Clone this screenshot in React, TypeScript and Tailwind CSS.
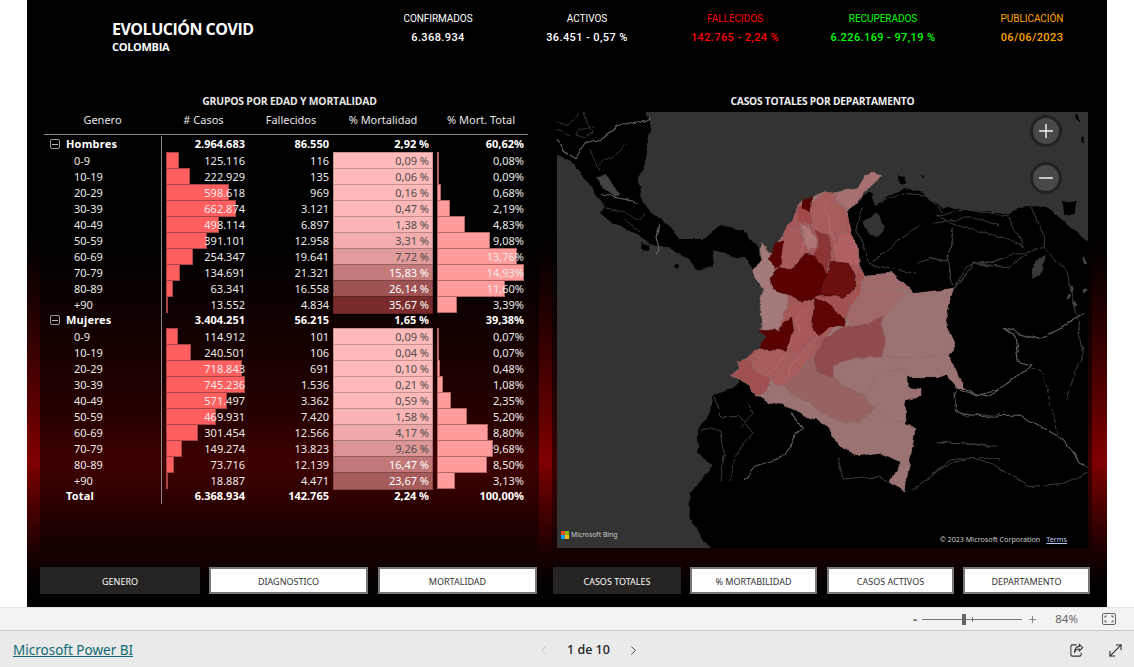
import { ChevronLeft, ChevronRight, Minus, MoveDiagonal, Plus } from "lucide-react";

type Row = { label: string; cases: string; dead: string; mort: string; total: string };

const MAX_CASES = 745236;
const MAX_TOTAL = 14.93;

const toNum = (s: string) => parseFloat(s.replace(/\./g, "").replace(",", "."));

// cell colour for % mortalidad, goes from pink to dark red
const mortColor = (v: number) => {
  const t = Math.min(v / 35.67, 1);
  const r = Math.round(255 - t * (255 - 122));
  const g = Math.round(186 - t * (186 - 44));
  const b = Math.round(186 - t * (186 - 44));
  return `rgb(${r},${g},${b})`;
};

const hombres: Row[] = [
  { label: "0-9", cases: "125.116", dead: "116", mort: "0,09 %", total: "0,08%" },
  { label: "10-19", cases: "222.929", dead: "135", mort: "0,06 %", total: "0,09%" },
  { label: "20-29", cases: "598.618", dead: "969", mort: "0,16 %", total: "0,68%" },
  { label: "30-39", cases: "662.874", dead: "3.121", mort: "0,47 %", total: "2,19%" },
  { label: "40-49", cases: "498.114", dead: "6.897", mort: "1,38 %", total: "4,83%" },
  { label: "50-59", cases: "391.101", dead: "12.958", mort: "3,31 %", total: "9,08%" },
  { label: "60-69", cases: "254.347", dead: "19.641", mort: "7,72 %", total: "13,76%" },
  { label: "70-79", cases: "134.691", dead: "21.321", mort: "15,83 %", total: "14,93%" },
  { label: "80-89", cases: "63.341", dead: "16.558", mort: "26,14 %", total: "11,60%" },
  { label: "+90", cases: "13.552", dead: "4.834", mort: "35,67 %", total: "3,39%" },
];

const mujeres: Row[] = [
  { label: "0-9", cases: "114.912", dead: "101", mort: "0,09 %", total: "0,07%" },
  { label: "10-19", cases: "240.501", dead: "106", mort: "0,04 %", total: "0,07%" },
  { label: "20-29", cases: "718.843", dead: "691", mort: "0,10 %", total: "0,48%" },
  { label: "30-39", cases: "745.236", dead: "1.536", mort: "0,21 %", total: "1,08%" },
  { label: "40-49", cases: "571.497", dead: "3.362", mort: "0,59 %", total: "2,35%" },
  { label: "50-59", cases: "469.931", dead: "7.420", mort: "1,58 %", total: "5,20%" },
  { label: "60-69", cases: "301.454", dead: "12.566", mort: "4,17 %", total: "8,80%" },
  { label: "70-79", cases: "149.274", dead: "13.823", mort: "9,26 %", total: "9,68%" },
  { label: "80-89", cases: "73.716", dead: "12.139", mort: "16,47 %", total: "8,50%" },
  { label: "+90", cases: "18.887", dead: "4.471", mort: "23,67 %", total: "3,13%" },
];

const gridCols = "grid grid-cols-[117px_85px_86px_102px_94px]";
const panelBg = "bg-linear-to-b from-black/60 from-[70%] to-black/35";

const GroupRow = ({ label, cases, dead, mort, total, box }: Row & { box?: boolean }) => (
  <div className={`${gridCols} h-4 items-center font-bold text-white`}>
    <div className="flex items-center pl-[6px]">
      {box ? (
        <span className="mr-[6px] flex h-[10px] w-[10px] items-center justify-center rounded-[2px] border border-[#999]">
          <span className="h-px w-[6px] bg-[#bbb]" />
        </span>
      ) : (
        <span className="w-4" />
      )}
      <span className="tracking-[0.2px]">{label}</span>
    </div>
    <div className="flex h-full items-center justify-end border-l border-[#888] pr-[1px]">{cases}</div>
    <div className="pr-[3px] text-right">{dead}</div>
    <div className="pr-[5px] text-right">{mort}</div>
    <div className="pr-[4px] text-right">{total}</div>
  </div>
);

const DataRow = ({ label, cases, dead, mort, total }: Row) => {
  const m = toNum(mort);
  const casesW = (toNum(cases) / MAX_CASES) * 79;
  const totalW = (toNum(total) / MAX_TOTAL) * 87;
  return (
    <div className={`${gridCols} h-4 items-center text-[#eaeaea]`}>
      <div className="pl-[30px]">{label}</div>
      <div className="relative flex h-full items-center justify-end border-l border-[#888] pr-[1px]">
        <div
          className="absolute top-0 bottom-px left-[4px] border border-[#a84444] bg-[#ff5f5f]"
          style={{ width: casesW }}
        />
        <span className="relative">{cases}</span>
      </div>
      <div className="pr-[3px] text-right">{dead}</div>
      <div
        className={`mx-px flex h-full items-center justify-end border border-[#00000038] pr-[3px] ${
          m >= 15 ? "text-white" : "text-[#4d4d4d]"
        }`}
        style={{ backgroundColor: mortColor(m) }}
      >
        {mort}
      </div>
      <div className="relative flex h-full items-center justify-end pr-[4px]">
        <div
          className="absolute top-0 bottom-px left-[3px] border border-[#b06464] bg-[#ff9c9c]"
          style={{ width: totalW }}
        />
        <span className="relative">{total}</span>
      </div>
    </div>
  );
};

const Kpi = ({ label, value, color, className }: { label: string; value: string; color: string; className: string }) => (
  <div className={`w-[120px] text-center font-['Roboto',sans-serif] ${color} ${className}`}>
    <div className="mt-px text-[10px] leading-[12px] tracking-[-0.05px]">{label}</div>
    <div className="mt-[6px] text-[11px] leading-[13px] font-medium tracking-[0.4px]">{value}</div>
  </div>
);

const Tab = ({ label, active, className }: { label: string; active?: boolean; className: string }) => (
  <div
    className={`flex h-[27px] items-center justify-center pt-[2px] text-[9px] ${className} ${
      active ? "bg-[#252423] text-white" : "border-2 border-[#777] bg-white text-[#333]"
    }`}
  >
    {label}
  </div>
);

// drawn in page coordinates of the reference, land is black on a grey sea
const MapDrawing = () => (
  <svg viewBox="557 112 531 436" className="block h-full w-full">
    <defs>
      <filter id="rough" x="-5%" y="-5%" width="110%" height="110%" colorInterpolationFilters="sRGB">
        <feTurbulence type="fractalNoise" baseFrequency="0.06" numOctaves="3" seed="4" />
        <feDisplacementMap in="SourceGraphic" scale="7" xChannelSelector="R" yChannelSelector="G" />
        <feGaussianBlur stdDeviation="0.35" />
      </filter>
    </defs>
    <rect x="557" y="112" width="531" height="436" fill="#333333" />
    <g filter="url(#rough)">
      {/* central america */}
      <path
        d="M540 95L635 95L648 118L650 130L645 160L637 182L643 203L658 217L678 238L702 238L718 226L743 230L760 247L762 262L755 272L745 258L712 250L714 267L695 270L690 262L670 247L655 247L645 240L625 227L612 223L600 213L605 207L592 187L578 170L565 158L540 145Z"
        fill="#000"
      />
      <path d="M598 178L605 177L620 193L615 197L602 188Z" fill="#444" />
      <path d="M643 243l8 3-3 5-6-2ZM676 263l4 2-3 4-3-2Z" fill="#000" />
      {/* south america */}
      <path
        d="M718 565L692 520L688 493L702 480L712 463L698 453L698 430L710 413L712 395L735 387L770 340L775 260L805 215L848 212L862 197L870 193L875 205L890 195L903 188L923 192L940 210L950 207L977 210L1007 213L1030 205L1047 208L1073 230L1100 247L1100 565Z"
        fill="#000"
      />
      <path d="M865 222L874 212L886 228L878 237L870 235Z" fill="#333" />
      <path d="M1063 203L1077 201L1076 214L1064 215Z" fill="#000" />
      <path d="M899 175L906 176L906 184L900 184ZM1075 115l4 1 1 7-4-2ZM1082 136l2 2-1 5-2-3ZM920 175l4 2-2 1Z" fill="#000" />
      <path d="M1034 262L1045 258L1040 275L1032 280Z" fill="#3a3a3a" />
      <path d="M1084 258l3 5M1082 290l4-2M1073 286l-2 6M1070 295l-2 5M1074 302l3 5" stroke="#444" strokeWidth="3" fill="none" />

      {/* borders and rivers */}
      <g fill="none" stroke="#666" strokeWidth="1.1">
        <path d="M557 140L563 150L575 158L585 143L598 140L613 130L617 123L632 125L650 118" />
        <path d="M603 195L618 198L638 202" />
        <path d="M658 225L655 237L658 250L655 255" />
      </g>
      <g fill="none" stroke="#3a3a3a" strokeWidth="0.9">
        <path d="M598 165L618 153L627 143" />
        <path d="M558 122L568 125L580 114M583 113L588 125L595 133L585 138L575 135L578 130L595 127" />
        <path d="M557 130L570 136M600 172L590 150M606 208L625 212L640 222L645 215M625 218L640 232" />
      </g>
      {/* right side, same scale as reference crop */}
      <g transform="translate(930 180) scale(0.3333)" fill="none">
        <g stroke="#5e5e5e" strokeWidth="3.5">
          <path d="M220 445L255 470L265 545L305 555L240 610L180 650L130 640L100 620" />
          <path d="M220 445L330 475L410 435L465 395" />
          <path d="M75 640L80 690L130 710L270 705L390 770L470 865" />
        </g>
        <g stroke="#3d3d3d" strokeWidth="3">
          <path d="M305 565L340 580L370 710L390 770" strokeDasharray="12 6" />
          <path d="M0 885L60 850L130 830L200 860L300 920L400 910L470 880" />
          <path d="M20 785L130 790L190 800" />
          <path d="M0 235L55 240L70 330L130 255L240 230L290 215L340 205" />
          <path d="M130 255L240 260L290 220" />
          <path d="M20 110L130 150L230 175L280 200L230 105" />
          <path d="M340 205L410 270L440 400L460 520L430 590L410 660" />
          <path d="M70 145L55 240M300 75L340 160L340 205M20 110L100 85L220 105L300 75" />
        </g>
      </g>
      {/* colombia and neighbours, same scale as the crop of the country */}
      <g transform="translate(700 160) scale(0.3333)">
        <g fill="none" stroke="#3d3d3d" strokeWidth="3">
          <path d="M490 140L470 210L510 310L580 330L650 340" />
          <path d="M520 305L600 240L660 195" />
          <path d="M700 190L810 170L900 200" />
          <path d="M760 200L745 300L760 390" />
          <path d="M530 130L600 100L680 105L720 160" />
          <path d="M650 310L700 295L750 300" />
          <path d="M760 390L800 320L900 300M780 370L830 310L900 320" />
          <path d="M770 690L765 740L800 770L900 760" />
          <path d="M710 845L830 850L900 860" />
          <path d="M640 990L750 900L830 890L900 900" />
          <path d="M40 700L60 770L110 770L160 820L100 900L90 960" />
          <path d="M0 810L60 810L70 880L60 960" />
          <path d="M410 890L430 960L540 950L615 990" />
          <path d="M120 800L160 760L140 730" />
        </g>
        <g fill="none" stroke="#5e5e5e" strokeWidth="3.5">
          <path d="M765 680L830 705L900 690" />
          <path d="M130 960L160 920L250 890L305 800L270 760" />
        </g>
        {/* base shape so no gap shows between the departments */}
        <path
          fill="#9c7373"
          d="M310 115L338 110L370 95L410 100L470 85L495 45L525 28L548 45L525 70L495 95L465 130L445 150L440 215L475 265L478 320L497 345L580 340L640 400L760 388L740 450L748 520L765 555L745 590L770 625L790 680L770 680L740 640L715 650L625 650L625 685L660 690L660 712L612 720L615 790L645 810L615 990L570 965L605 905L540 880L475 890L430 860L385 810L350 775L300 760L250 735L205 725L170 705L140 670L95 650L115 625L110 605L130 595L155 600L180 568L195 530L180 510L190 505L180 430L190 395L160 325L190 300L185 250L210 285L225 245L265 205L290 185L295 140Z"
        />
        <path
          fill="#a55858"
          d="M300 130L440 145L478 320L470 400L437 475L370 530L340 600L250 680L215 655L130 595L180 568L240 490L230 325L240 240Z"
        />
        <g stroke="#8d6a6a" strokeWidth="1.5">
          <path fill="#9c7373" d="M555 590L745 590L770 625L790 680L770 680L740 640L715 650L625 650L610 625Z" />
          <path fill="#9c7373" d="M550 470L610 405L655 398L760 388L740 450L748 520L765 555L745 590L600 590L550 585Z" />
          <path fill="#9c7373" d="M205 725L250 735L300 760L350 775L385 810L430 860L475 890L540 880L605 905L570 965L615 990L645 810L615 790L560 770L530 745L470 790L380 770L310 720L250 690L225 670L200 700Z" />
          <path fill="#9c7373" d="M610 625L620 650L625 685L660 690L660 712L612 720L615 790L560 770L530 745L495 710L530 650Z" />
          <path fill="#9c7373" d="M400 620L470 590L555 585L610 625L530 650L495 710L440 680L400 655Z" />
          <path fill="#966262" d="M250 680L340 585L350 630L400 655L440 680L495 710L530 745L470 790L380 770L310 720Z" />
          <path fill="#9e6a6a" d="M497 345L580 340L640 400L560 390L480 395Z" />
          <path fill="#a06868" d="M478 395L560 388L618 402L550 470L460 500L437 475Z" />
          <path fill="#904c4c" d="M550 470L550 585L470 590L400 620L400 655L350 630L340 600L370 530L435 505L460 500Z" />
          <path fill="#a85050" d="M465 375L497 345L478 395L437 475L410 430L430 415Z" />
          <path fill="#a87070" d="M410 100L470 85L495 45L525 28L548 45L525 70L495 95L465 130L445 150L430 130L405 122Z" />
          <path fill="#a85c5c" d="M335 130L370 95L405 100L405 125L440 145L430 215L385 225L340 200L330 170Z" />
          <path fill="#a04848" d="M295 140L310 130L335 155L335 195L310 190L290 185Z" />
          <path fill="#a85a5a" d="M240 240L265 205L300 210L310 250L335 270L300 295L275 325L240 320Z" />
          <path fill="#b07575" d="M300 195L325 205L350 240L345 265L320 270L305 230Z" />
          <path fill="#8c3535" d="M340 205L390 225L395 300L380 345L350 305L345 280L355 240Z" />
          <path fill="#b06060" d="M415 220L440 215L475 265L478 320L445 310L410 305L405 270Z" />
          <path fill="#a25050" d="M355 405L395 405L430 415L465 375L478 320L497 345L465 385L437 475L410 465L395 440L345 415Z" />
          <path fill="#a57a7a" d="M160 325L190 300L185 250L210 285L205 300L230 325L212 355L215 385L260 400L262 440L240 490L230 515L190 505L180 430L190 395Z" />
          <path fill="#a85858" d="M260 435L345 420L330 490L350 510L320 560L290 585L262 570L285 490Z" />
          <path fill="#a85c5c" d="M155 600L180 570L262 570L290 585L215 655L160 630Z" />
          <path fill="#a05050" d="M95 650L115 625L110 605L130 595L155 600L160 630L215 655L190 700L170 705L140 670Z" />
          <path fill="#a85c5c" d="M290 585L320 560L352 530L340 585L250 680L225 670L215 655Z" />
        </g>
        {/* darkest departments, with a dark edge so they read as one mass */}
        <g stroke="#3a0000" strokeWidth="1.5">
          <path fill="#6b0f0f" d="M395 305L445 310L468 350L465 375L430 415L395 405L355 405L355 385L385 345Z" />
          <path fill="#5a0202" d="M210 355L240 325L280 325L320 280L350 285L385 345L355 405L310 430L260 400L215 385Z" />
          <path fill="#600505" d="M345 415L395 440L410 465L435 480L430 505L385 500L355 530L335 490Z" />
          <path fill="#5a0202" d="M245 490L275 465L280 510L262 570L180 568L195 530L180 510L235 515Z" />
          <path fill="#5a0000" d="M205 300L225 245L250 240L240 320L230 325Z" />
          <path fill="#5a0000" d="M310 115L338 110L335 152L312 142Z" />
        </g>
        <g fill="none" stroke="#d09a9a" strokeOpacity="0.4" strokeWidth="2">
          <path d="M375 125L395 215L410 290" />
          <path d="M305 170L325 210L300 280" />
          <path d="M320 450L290 470L300 520L235 610L190 660" />
          <path d="M355 525L280 610L240 680" />
        </g>
      </g>
    </g>
  </svg>
);

export default function App() {
  return (
    <div className="flex h-[667px] w-[1134px] flex-col overflow-hidden bg-white font-['Noto_Sans',sans-serif]">
      <div className="ml-[27px] flex h-[607px] w-[1080px] flex-col bg-linear-to-b from-black from-[33%] via-[#800000] via-[76%] to-black">
        {/* header */}
        <div className="flex h-[95px] pt-[12px]">
          <div className="ml-[85px] w-[256px] pt-[7px] font-['Open_Sans',sans-serif] font-bold text-white">
            <div className="text-[16px] leading-[20px] tracking-[-0.5px]">EVOLUCIÓN COVID</div>
            <div className="mt-px text-[11px] leading-[13px] tracking-[-0.3px]">COLOMBIA</div>
          </div>
          <Kpi label="CONFIRMADOS" value="6.368.934" color="text-white" className="ml-[10px]" />
          <Kpi label="ACTIVOS" value="36.451 - 0,57 %" color="text-white" className="ml-[29px]" />
          <Kpi label="FALLECIDOS" value="142.765 - 2,24 %" color="text-[#ff0000]" className="ml-[28px]" />
          <Kpi label="RECUPERADOS" value="6.226.169 - 97,19 %" color="text-[#00ff00]" className="ml-[28px]" />
          <Kpi label="PUBLICACIÓN" value="06/06/2023" color="text-[#ffa500]" className="ml-[29px]" />
        </div>

        {/* panels */}
        <div className="flex h-[458px]">
          <div className={`ml-[13px] w-[499px] text-[11px] leading-4 ${panelBg}`}>
            <div className="h-3 text-center font-['Open_Sans',sans-serif] text-[10.4px] leading-3 font-bold tracking-[-0.2px] text-[#e6e6e6]">
              GRUPOS POR EDAD Y MORTALIDAD
            </div>
            <div className="ml-1 w-[484px]">
              <div className={`${gridCols} h-[28px] items-center border-b border-[#888] pb-[2px] text-center text-[#e6e6e6]`}>
                <div>Genero</div>
                <div># Casos</div>
                <div className="pl-[4px]">Fallecidos</div>
                <div>% Mortalidad</div>
                <div>% Mort. Total</div>
              </div>
              <div className="mt-px">
                <GroupRow label="Hombres" cases="2.964.683" dead="86.550" mort="2,92 %" total="60,62%" box />
                {hombres.map((r) => (
                  <DataRow key={"h" + r.label} {...r} />
                ))}
                <GroupRow label="Mujeres" cases="3.404.251" dead="56.215" mort="1,65 %" total="39,38%" box />
                {mujeres.map((r) => (
                  <DataRow key={"m" + r.label} {...r} />
                ))}
                <GroupRow label="Total" cases="6.368.934" dead="142.765" mort="2,24 %" total="100,00%" />
              </div>
            </div>
          </div>

          <div className={`ml-[13px] flex w-[540px] flex-col pr-[4px] pb-[5px] pl-[5px] ${panelBg}`}>
            <div className="h-[17px] text-center font-['Open_Sans',sans-serif] text-[10.2px] leading-3 font-bold tracking-[-0.2px] text-[#f0f0f0]">
              CASOS TOTALES POR DEPARTAMENTO
            </div>
            <div className="relative min-h-0 flex-1">
              <MapDrawing />
              <button className="absolute top-[3px] right-[26px] flex h-8 w-8 items-center justify-center rounded-full border-[3px] border-[#222] bg-[#484848] text-[#eee]">
                <Plus size={22} strokeWidth={1.6} />
              </button>
              <button className="absolute top-[50px] right-[26px] flex h-8 w-8 items-center justify-center rounded-full border-[3px] border-[#222] bg-[#484848] text-[#eee]">
                <Minus size={22} strokeWidth={1.6} />
              </button>
              <div className="absolute bottom-[8px] left-[4px] flex items-center gap-[2px] text-[6.8px] text-[#ccc]">
                <span className="grid h-[8px] w-[8px] grid-cols-2">
                  <span className="bg-[#f25022]" />
                  <span className="bg-[#7fba00]" />
                  <span className="bg-[#00a4ef]" />
                  <span className="bg-[#ffb900]" />
                </span>
                Microsoft Bing
              </div>
              <div className="absolute right-[21px] bottom-[4px] flex gap-[6px] text-[7.2px] leading-[10px] text-[#ccc]">
                <span>© 2023 Microsoft Corporation</span>
                <span className="text-[#b9c8f0] underline">Terms</span>
              </div>
            </div>
          </div>
        </div>

        {/* slicer buttons */}
        <div className="mt-[14px] flex">
          <Tab label="GENERO" active className="ml-[13px] w-[160px]" />
          <Tab label="DIAGNOSTICO" className="ml-[9px] w-[159px]" />
          <Tab label="MORTALIDAD" className="ml-[10px] w-[159px]" />
          <Tab label="CASOS TOTALES" active className="ml-[16px] w-[128px]" />
          <Tab label="% MORTABILIDAD" className="ml-[9px] w-[127px]" />
          <Tab label="CASOS ACTIVOS" className="ml-[10px] w-[127px]" />
          <Tab label="DEPARTAMENTO" className="ml-[9px] w-[127px]" />
        </div>
      </div>

      {/* zoom strip */}
      <div className="flex h-[23px] items-center justify-end border-t border-[#e4e4e4] bg-[#f3f3f3] pr-[18px] text-[#666]">
        <span className="text-[13px] leading-none font-bold">-</span>
        <div className="relative mx-[5px] h-px w-[100px] bg-[#777]">
          <span className="absolute top-[-5px] left-[40px] h-[11px] w-[4px] bg-[#666]" />
          <span className="absolute top-[-2px] left-[50px] h-[5px] w-px bg-[#777]" />
        </div>
        <Plus size={11} strokeWidth={1.6} />
        <span className="ml-[17px] text-[11.5px]">84%</span>
        <svg width="14" height="12" viewBox="0 0 14 12" className="ml-[24px]" fill="none" stroke="#666">
          <rect x="0.5" y="0.5" width="13" height="11" rx="1.5" />
          <path d="M3 5V3h2M9 3h2v2M11 7v2H9M5 9H3V7" />
        </svg>
      </div>

      {/* footer */}
      <div className="flex h-[37px] items-center border-t border-[#c8c8c8] bg-[#eaeaea] pt-[2px] pl-[13px]">
        <a className="w-[523px] text-[13.5px] text-[#0f6b75] underline">Microsoft Power BI</a>
        <ChevronLeft size={15} className="text-[#c0c0c0]" strokeWidth={1.5} />
        <span className="ml-[16px] text-[12.5px] font-medium text-[#222]">1 de 10</span>
        <ChevronRight size={15} className="ml-[16px] text-[#444]" strokeWidth={1.5} />
        <svg width="15" height="15" viewBox="0 0 16 16" className="ml-[428px]" fill="none" stroke="#333" strokeWidth="1.1">
          <path d="M8 2H3.5A1.5 1.5 0 0 0 2 3.5v9A1.5 1.5 0 0 0 3.5 14h8a1.5 1.5 0 0 0 1.5-1.5V10" />
          <path d="M11 1.5L14.5 5 11 8.5V6.5C8.5 6.5 6.5 8 6 10.5 5.5 7 7.5 3.6 11 3.6Z" />
        </svg>
        <MoveDiagonal size={19} strokeWidth={1.3} className="ml-[22px] text-[#222]" />
      </div>
    </div>
  );
}
